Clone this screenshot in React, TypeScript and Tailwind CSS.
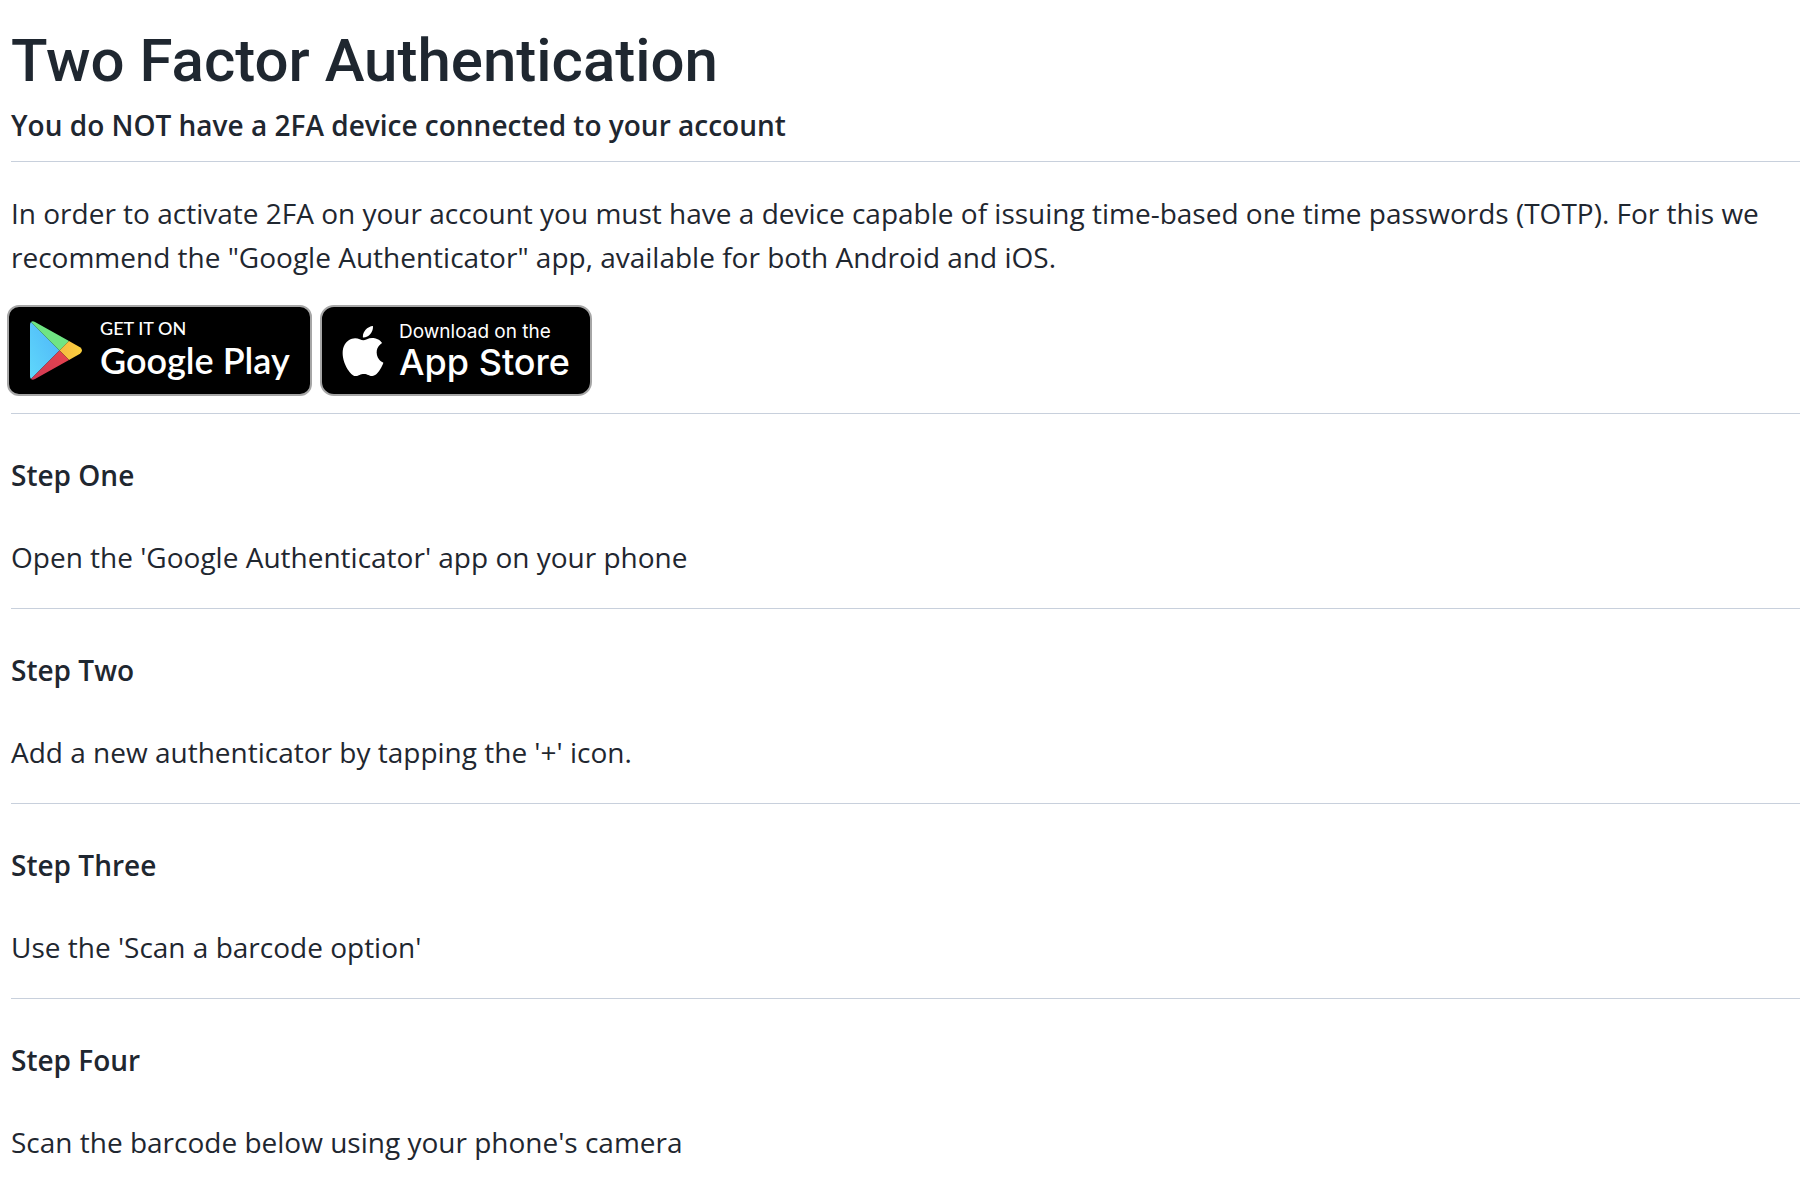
import { SiApple } from 'react-icons/si';

const steps = [
  { title: 'Step One', text: "Open the 'Google Authenticator' app on your phone" },
  { title: 'Step Two', text: "Add a new authenticator by tapping the '+' icon." },
  { title: 'Step Three', text: "Use the 'Scan a barcode option'" },
  { title: 'Step Four', text: "Scan the barcode below using your phone's camera" },
];

function PlayLogo() {
  return (
    <svg viewBox="0 0 52 59" className="h-[59px] w-[52px] shrink-0" aria-hidden="true">
      <defs>
        <linearGradient id="play-blue" x1="1" y1="0" x2="0" y2="1">
          <stop offset="0" stopColor="#4fb4f8" />
          <stop offset="1" stopColor="#5fd8fb" />
        </linearGradient>
        <linearGradient id="play-yellow" x1="1" y1="0" x2="0" y2="0">
          <stop offset="0" stopColor="#fbd03c" />
          <stop offset="1" stopColor="#f5b942" />
        </linearGradient>
        <linearGradient id="play-red" x1="1" y1="0" x2="0" y2="1">
          <stop offset="0" stopColor="#e8434d" />
          <stop offset="1" stopColor="#cf3a55" />
        </linearGradient>
      </defs>
      <path d="M1 1 Q0 2 0 4 V55 Q0 57 1 58 L29.5 29.5 Z" fill="url(#play-blue)" />
      <path d="M1 1 Q2.500 -0.500 5 1 L39 20 L29.500 29.500 Z" fill="#6fe583" />
      <path d="M39 20 L50 26.300 Q54 29.500 50 32.700 L39 39 L29.500 29.500 Z" fill="url(#play-yellow)" />
      <path d="M1 58 Q2.500 59.500 5 58 L39 39 L29.500 29.500 Z" fill="url(#play-red)" />
    </svg>
  );
}

export default function App() {
  return (
    <main className="min-h-screen bg-white pl-[11px] pt-6 pb-8 font-['Open_Sans',sans-serif] text-[28px] leading-[44px] text-[#1f2730]">
      <header className="border-b border-[#c8d0dc] pb-[14px]">
        <h1 className="font-['Roboto',sans-serif] text-[60px] font-medium leading-[74px]">Two Factor Authentication</h1>
        <h2 className="pt-[5px] font-semibold">You do NOT have a 2FA device connected to your account</h2>
      </header>

      <section className="border-b border-[#c8d0dc] pt-[29px] pb-[17px]">
        <p className="pr-5">
          In order to activate 2FA on your account you must have a device capable of issuing time-based one time
          passwords (TOTP). For this we recommend the "Google Authenticator" app, available for both Android and iOS.
        </p>
        <div className="-ml-1 flex gap-2 pt-[26px] text-white">
          <a
            href="#google-play"
            className="flex h-[91px] w-[305px] items-center gap-[18px] rounded-xl border-2 border-[#a6a6a6] bg-black pl-[21px] font-['Lato',sans-serif]"
          >
            <PlayLogo />
            <span className="flex flex-col pb-[5px]">
              <span className="text-[18px] font-medium leading-6">GET IT ON</span>
              <span className="text-[36px] font-semibold leading-10">Google Play</span>
            </span>
          </a>
          <a
            href="#app-store"
            className="flex h-[91px] w-[272px] items-center gap-[11px] rounded-[14px] border-2 border-[#a6a6a6] bg-black pl-4 font-['Inter',sans-serif]"
          >
            <SiApple className="size-[50px] shrink-0" aria-hidden="true" />
            <span className="flex flex-col pb-px">
              <span className="text-[19px] leading-6">Download on the</span>
              <span className="text-[36px] font-medium leading-9">App Store</span>
            </span>
          </a>
        </div>
      </section>

      {steps.map((step) => (
        <section key={step.title} className="border-b border-[#c8d0dc] pt-[39px] pb-[29px] last:border-b-0">
          <h3 className="font-semibold">{step.title}</h3>
          <p className="pt-[38px]">{step.text}</p>
        </section>
      ))}
    </main>
  );
}
